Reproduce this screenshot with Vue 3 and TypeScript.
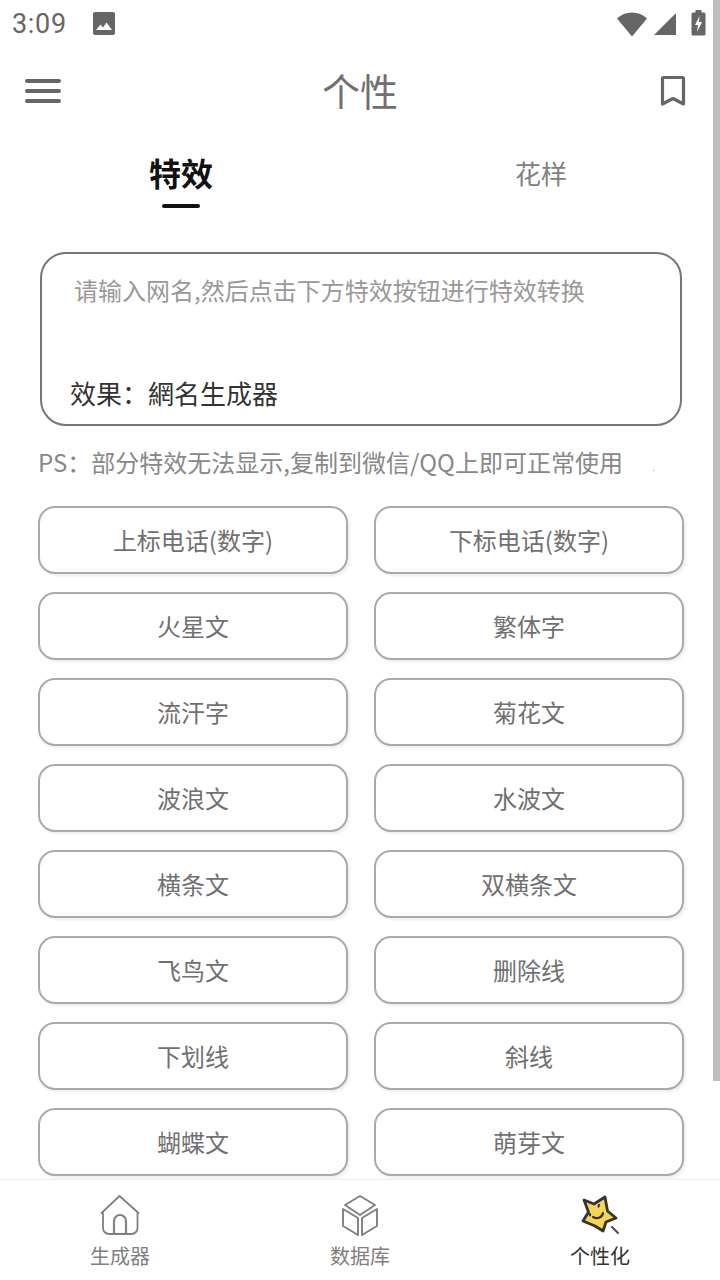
<script setup lang="ts">
const effects: string[] = [
  '上标电话(数字)', '下标电话(数字)',
  '火星文', '繁体字',
  '流汗字', '菊花文',
  '波浪文', '水波文',
  '横条文', '双横条文',
  '飞鸟文', '删除线',
  '下划线', '斜线',
  '蝴蝶文', '萌芽文',
]
</script>

<template>
  <div class="page">
    <!-- status bar -->
    <div class="status">
      <span class="time">3:09</span>
      <svg class="pic" width="24" height="24" viewBox="0 0 24 24">
        <path fill="#666" d="M3 0h18a2 2 0 0 1 2 2v19a2 2 0 0 1-2 2H3a2 2 0 0 1-2-2V2a2 2 0 0 1 2-2z" />
        <path fill="#fff" d="M4 18l4.500-5.500 2.500 3 3.500-5L20 18z" />
      </svg>
      <span class="spacer" />
      <svg width="32" height="26" viewBox="0 0 32 26">
        <path fill="#666" d="M16 25.500 1 7.500C5 3.500 10 1.500 16 1.500s11 2 15 6z" />
      </svg>
      <svg class="signal" width="24" height="24" viewBox="0 0 24 24">
        <path fill="#666" d="M23 1v22H1z" />
      </svg>
      <svg class="battery" width="15" height="26" viewBox="0 0 15 26">
        <path fill="#666" d="M4.500 0h6v2.500H13a1.500 1.500 0 0 1 1.500 1.500v20a1.500 1.500 0 0 1-1.500 1.500H2A1.500 1.500 0 0 1 .5 24V4A1.500 1.500 0 0 1 2 2.500h2.500z" />
        <path fill="#fff" d="M8.500 6 4 15h3l-1 7 5-10H8z" />
      </svg>
    </div>

    <!-- toolbar -->
    <div class="toolbar">
      <div class="menu"><i /><i /><i /></div>
      <div class="title">个性</div>
      <svg class="bookmark" width="26" height="32" viewBox="0 0 26 32">
        <path fill="none" stroke="#666" stroke-width="3.200" stroke-linejoin="round" d="M3.500 2.500h19a1 1 0 0 1 1 1V29L13 23.500 2.500 29V3.500a1 1 0 0 1 1-1z" />
      </svg>
    </div>

    <!-- tabs -->
    <div class="tabs">
      <div class="tab active">
        <span>特效</span>
        <i class="underline" />
      </div>
      <div class="tab"><span>花样</span></div>
    </div>

    <div class="content">
      <div class="inputbox">
        <div class="placeholder">请输入网名,然后点击下方特效按钮进行特效转换</div>
        <div class="result">效果：網名生成器</div>
      </div>
      <div class="ps">PS：部分特效无法显示,复制到微信/QQ上即可正常使用</div>
      <div class="grid">
        <div v-for="name in effects" :key="name" class="btn">{{ name }}</div>
      </div>
    </div>

    <!-- bottom nav -->
    <div class="nav">
      <div class="nav-item">
        <svg width="40" height="42" viewBox="0 0 40 42" fill="none" stroke="#808080" stroke-width="1.800" stroke-linejoin="round" stroke-linecap="round">
          <path d="M1.500 19 19.500 2l19 17" />
          <path d="M3 19v15a6 6 0 0 0 6 6h22.500a6 6 0 0 0 6-6V19" />
          <path d="M14 40V27a6 6 0 0 1 12 0v13" stroke-width="2.200" />
        </svg>
        <span>生成器</span>
      </div>
      <div class="nav-item">
        <svg width="40" height="42" viewBox="0 0 40 42" fill="none" stroke="#808080" stroke-width="1.900" stroke-linejoin="round">
          <path d="M20 2 35 11 20 21 5 11z" />
          <path d="M3 15v17l15 9V24z" />
          <path d="M37 15v17l-15 9V24z" />
        </svg>
        <span>数据库</span>
      </div>
      <div class="nav-item on">
        <svg width="44" height="42" viewBox="0 0 44 42">
          <path fill="#f5d556" stroke="#333" stroke-width="2.800" stroke-linejoin="round" d="M6 6 16 10 27 3 29.500 17 38 24 28 28 25 37 17 32 5 27 10.500 18z" />
          <path fill="none" stroke="#333" stroke-width="2.200" stroke-linecap="round" d="M12 20v1.500M21 11l-.5 1.500M15 23c4 2.500 9 1 10-4" />
          <path fill="none" stroke="#555" stroke-width="2.200" stroke-linecap="round" d="M34 33 40 39" />
        </svg>
        <span>个性化</span>
      </div>
    </div>

    <!-- overlay scrollbar -->
    <div class="scrollbar" />
    <i class="speck" />
  </div>
</template>

<style>
html, body { margin: 0; background: #fff; }
</style>

<style scoped>
.page {
  position: relative;
  width: 720px;
  height: 1280px;
  overflow: hidden;
  display: flex;
  flex-direction: column;
  background: #fff;
  font-family: "Noto Sans CJK SC", "Noto Sans", sans-serif;
}

/* status bar */
.status {
  height: 48px;
  flex: none;
  display: flex;
  align-items: center;
  padding: 0 14px 0 12px;
  box-sizing: border-box;
}
.time {
  font-family: Roboto, sans-serif;
  font-size: 27px;
  color: #666;
  letter-spacing: 0.7px;
}
.pic { margin-left: 25px; margin-top: -1px; }
.spacer { flex: 1; }
.signal { margin-left: 5px; margin-top: -1px; }
.battery { margin-left: 14px; margin-top: -3px; }

/* toolbar */
.toolbar {
  height: 84px;
  flex: none;
  display: flex;
  align-items: center;
  justify-content: space-between;
  padding: 2px 34px 0 25px;
  box-sizing: border-box;
  position: relative;
}
.menu {
  display: flex;
  flex-direction: column;
  gap: 6px;
  width: 36px;
}
.menu i {
  display: block;
  height: 4px;
  border-radius: 2px;
  background: #666;
}
.title {
  position: absolute;
  left: 0;
  right: 0;
  top: 0;
  text-align: center;
  font-size: 38px;
  color: #707070;
  line-height: 84px;
  pointer-events: none;
}

/* tabs */
.tabs {
  display: flex;
  flex: none;
  height: 120px;
}
.tab {
  flex: 1;
  display: flex;
  flex-direction: column;
  align-items: center;
  padding-top: 19px;
  padding-left: 2px;
  color: #808080;
  font-size: 26px;
  line-height: 44px;
}
.tab.active {
  padding-top: 18px;
  color: #111;
  font-size: 32px;
  font-weight: 700;
}
.underline {
  display: block;
  width: 38px;
  height: 4px;
  border-radius: 2px;
  background: #111;
  margin-top: 10px;
}

.content {
  flex: 1;
  min-height: 0;
  overflow: hidden;
  padding: 0 38px 0 38px;
}
.inputbox {
  margin-left: 2px;
  height: 174px;
  box-sizing: border-box;
  border: 2px solid #777;
  border-radius: 26px;
  display: flex;
  flex-direction: column;
  justify-content: space-between;
  padding: 17px 28px 12px 28px;
}
.placeholder {
  font-size: 24px;
  line-height: 38px;
  color: #999;
  padding-left: 4px;
}
.result {
  font-size: 26px;
  line-height: 38px;
  color: #333;
}
.ps {
  margin-top: 15px;
  font-size: 24px;
  line-height: 42px;
  color: #888;
  white-space: nowrap;
}
.grid {
  margin-top: 23px;
  display: grid;
  grid-template-columns: 310px 310px;
  column-gap: 26px;
  row-gap: 18px;
}
.btn {
  height: 68px;
  box-sizing: border-box;
  border: 2px solid #aaa;
  border-radius: 17px;
  background: #fff;
  box-shadow: 2px 2px 3px rgba(0, 0, 0, 0.07);
  display: flex;
  align-items: center;
  justify-content: center;
  padding-bottom: 2px;
  font-size: 24px;
  color: #707070;
}

/* bottom nav */
.nav {
  flex: none;
  height: 101px;
  box-sizing: border-box;
  border-top: 1px solid #eee;
  background: #fff;
  display: flex;
}
.nav-item {
  flex: 1;
  display: flex;
  flex-direction: column;
  align-items: center;
  padding-top: 14px;
  font-size: 20px;
  line-height: 30px;
  color: #808080;
}
.nav-item svg { display: block; margin-bottom: 5px; }
.nav-item.on { color: #333; }

.scrollbar {
  position: absolute;
  top: 0;
  right: 0;
  width: 7px;
  height: 1081px;
  background: #bdbdbd;
}
.speck {
  position: absolute;
  left: 653px;
  top: 470px;
  width: 1px;
  height: 1px;
  background: #999;
}
</style>
